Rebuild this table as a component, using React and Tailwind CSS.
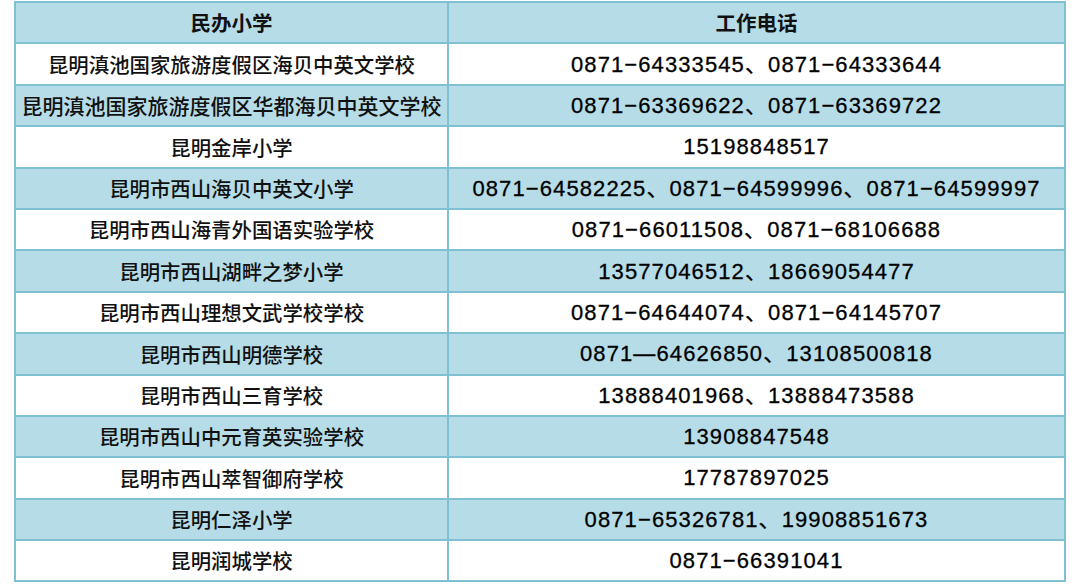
const schools = [
  ["昆明滇池国家旅游度假区海贝中英文学校", "0871−64333545、0871−64333644"],
  ["昆明滇池国家旅游度假区华都海贝中英文学校", "0871−63369622、0871−63369722", true],
  ["昆明金岸小学", "15198848517"],
  ["昆明市西山海贝中英文小学", "0871−64582225、0871−64599996、0871−64599997"],
  ["昆明市西山海青外国语实验学校", "0871−66011508、0871−68106688"],
  ["昆明市西山湖畔之梦小学", "13577046512、18669054477"],
  ["昆明市西山理想文武学校学校", "0871−64644074、0871−64145707"],
  ["昆明市西山明德学校", "0871—64626850、13108500818"],
  ["昆明市西山三育学校", "13888401968、13888473588"],
  ["昆明市西山中元育英实验学校", "13908847548"],
  ["昆明市西山萃智御府学校", "17787897025"],
  ["昆明仁泽小学", "0871−65326781、19908851673"],
  ["昆明润城学校", "0871−66391041"],
];

const cjk = { fontFamily: '"Noto Sans CJK SC", "Noto Sans", sans-serif' };
const num = { fontFamily: '"Liberation Sans", "Noto Sans CJK SC", sans-serif' };

export default function App() {
  return (
    <div className="w-[1080px] h-[585px] bg-white pt-px pl-[14px]">
      <div className="w-[1052px] border-t-2 border-l-2 border-r-2 border-[#7fc0d2]">
        {/* 表头 */}
        <div className="flex h-[41.4px] bg-[#b6dce7] border-b-2 border-[#7fc0d2]">
          <div
            className="w-[433px] border-r-2 border-[#7fc0d2] flex items-center justify-center text-[20.5px] font-bold text-[#111]"
            style={cjk}
          >
            民办小学
          </div>
          <div
            className="flex-1 flex items-center justify-center text-[20.5px] font-bold text-[#111]"
            style={cjk}
          >
            工作电话
          </div>
        </div>

        {schools.map(([name, phone, wide], i) => (
          <div
            key={name}
            className={
              "flex h-[41.4px] border-b-2 border-[#7fc0d2] " +
              (i % 2 === 1 ? "bg-[#b6dce7]" : "bg-white")
            }
          >
            <div
              className={
                "w-[433px] border-r-2 border-[#7fc0d2] flex items-center justify-center font-medium text-[#111] whitespace-nowrap " +
                (wide ? "text-[21px]" : "text-[20.4px]")
              }
              style={cjk}
            >
              {name}
            </div>
            <div
              className="flex-1 flex items-center justify-center text-[22px] tracking-[1.1px] text-black whitespace-nowrap [-webkit-text-stroke:0.3px_#000]"
              style={num}
            >
              {phone}
            </div>
          </div>
        ))}
      </div>
    </div>
  );
}
